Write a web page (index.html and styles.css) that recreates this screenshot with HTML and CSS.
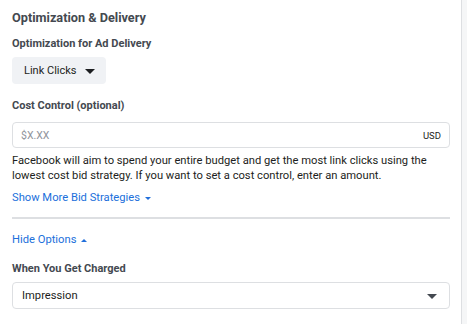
FILE: index.html
```html
<!DOCTYPE html>
<html lang="en">
<head>
    <meta charset="UTF-8">
    <meta name="viewport" content="width=device-width, initial-scale=1.0">
    <title>Optimization &amp; Delivery</title>
    <link rel="stylesheet" href="styles.css">
</head>
<body>
    <div class="page">
        <div class="card">
            <h2 class="section-title">Optimization &amp; Delivery</h2>

            <div class="field">
                <div class="label">Optimization for Ad Delivery</div>
                <button class="pill-select">Link Clicks <span class="caret"></span></button>
            </div>

            <div class="field cost">
                <div class="label">Cost Control (optional)</div>
                <div class="money-input">
                    <input type="text" placeholder="$X.XX">
                    <span class="currency">USD</span>
                </div>
                <p class="help">Facebook will aim to spend your entire budget and get the most link clicks using the lowest cost bid strategy. If you want to set a cost control, enter an amount.</p>
                <a class="link" href="#">Show More Bid Strategies <span class="mini-caret down"></span></a>
            </div>

            <hr class="divider">

            <a class="link hide-link" href="#">Hide Options <span class="mini-caret up"></span></a>

            <div class="field charged">
                <div class="label">When You Get Charged</div>
                <div class="select-box">
                    <span>Impression</span>
                    <span class="caret"></span>
                </div>
            </div>
        </div>
        <div class="side"></div>
    </div>
</body>
</html>
```

FILE: styles.css
```css
body {
    margin: 0;
    font-family: Roboto, Arial, sans-serif;
    color: #1c1e21;
    background: #fff;
}
.page {
    display: flex;
    height: 324px;
    overflow: hidden;
}
.card {
    width: 438px;
    padding: 9px 11px 0 12px;
    border-right: 1px solid #dddfe2;
}
.side {
    flex: 1;
    background: #f5f6f7;
}
.section-title {
    margin: 0 0 11px;
    font-size: 12.7px;
    font-weight: 700;
    line-height: 17px;
    color: #444950;
}
.label {
    font-size: 11px;
    font-weight: 700;
    line-height: 14px;
    color: #444950;
    margin-bottom: 6px;
}
.field {
    margin-bottom: 15px;
}
.cost {
    margin-bottom: 11px;
}
.cost .label {
    margin-bottom: 9px;
}
.pill-select {
    display: inline-flex;
    align-items: center;
    gap: 8px;
    height: 27px;
    padding: 0 11px 0 12px;
    border: none;
    border-radius: 4px;
    background: #f0f2f5;
    font-family: inherit;
    font-size: 11px;
    color: #1c1e21;
    white-space: nowrap;
}
.caret {
    width: 0;
    height: 0;
    border-left: 5px solid transparent;
    border-right: 5px solid transparent;
    border-top: 5px solid #1c1e21;
    margin-top: 1px;
}
.money-input {
    display: flex;
    align-items: center;
    height: 26px;
    box-sizing: border-box;
    border: 1px solid #dddfe2;
    border-radius: 4px;
    padding: 0 8px;
}
.money-input input {
    flex: 1;
    border: none;
    outline: none;
    padding: 0;
    font-family: inherit;
    font-size: 10.5px;
}
.money-input input::placeholder {
    color: #90949c;
}
.currency {
    font-size: 9.5px;
    color: #1c1e21;
}
.help {
    margin: 5px 0 3px;
    font-size: 11.2px;
    line-height: 15px;
    color: #1c1e21;
}
.link {
    display: inline-flex;
    align-items: center;
    gap: 5px;
    font-size: 11.2px;
    line-height: 16px;
    color: #216fdb;
    text-decoration: none;
}
.mini-caret {
    width: 0;
    height: 0;
    border-left: 3px solid transparent;
    border-right: 3px solid transparent;
}
.mini-caret.down {
    border-top: 3px solid #216fdb;
}
.mini-caret.up {
    border-bottom: 3px solid #216fdb;
}
.divider {
    margin: 7px 0 9px;
    border: none;
    border-top: 2px solid #dddfe2;
}
.hide-link {
    margin-bottom: 14px;
}
.select-box {
    display: flex;
    align-items: center;
    justify-content: space-between;
    height: 27px;
    box-sizing: border-box;
    padding: 0 12px 0 9px;
    border: 1px solid #dddfe2;
    border-radius: 4px;
    font-size: 11.2px;
    color: #1c1e21;
}
.select-box .caret {
    border-top-color: #444950;
}
```
